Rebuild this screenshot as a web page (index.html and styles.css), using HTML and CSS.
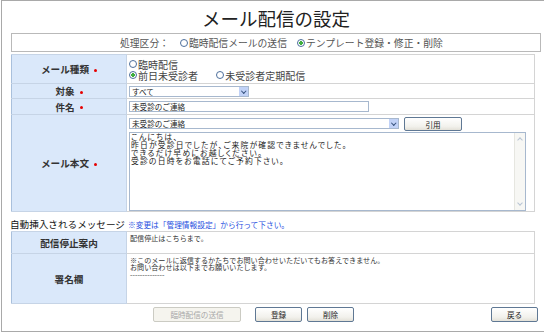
FILE: index.html
```html
<!DOCTYPE html>
<html lang="ja">
<head>
    <meta charset="UTF-8">
    <title>メール配信の設定</title>
    <link rel="stylesheet" href="styles.css">
</head>
<body>

    <div class="page">
        <h1 class="title">メール配信の設定</h1>

        <div class="mode">
            <span class="mode-label">処理区分：</span>
            <span class="opt"><span class="radio"></span>臨時配信メールの送信</span>
            <span class="opt"><span class="radio on"></span>テンプレート登録・修正・削除</span>
        </div>

        <table class="form main">
            <tr class="r-type">
                <th>メール種類<span class="req"></span></th>
                <td>
                    <div class="line"><span class="opt"><span class="radio"></span>臨時配信</span></div>
                    <div class="line">
                        <span class="opt"><span class="radio on"></span>前日未受診者</span>
                        <span class="opt"><span class="radio"></span>未受診者定期配信</span>
                    </div>
                </td>
            </tr>
            <tr class="r-target">
                <th>対象<span class="req"></span></th>
                <td><div class="select w-target">すべて<span class="arrow"></span></div></td>
            </tr>
            <tr class="r-subject">
                <th>件名<span class="req"></span></th>
                <td><div class="input w-subject">未受診のご連絡</div></td>
            </tr>
            <tr class="r-body">
                <th>メール本文<span class="req"></span></th>
                <td>
                    <div class="tpl">
                        <div class="select w-tpl">未受診のご連絡<span class="arrow"></span></div>
                        <button class="btn btn-quote">引用</button>
                    </div>
                    <div class="textarea">
                        <div class="ta-text">
                            <div class="ta-line">こんにちは、</div>
                            <div class="ta-line">昨日が受診日でしたが、ご来院が確認できませんでした。</div>
                            <div class="ta-line">できるだけ早めにお越しください。</div>
                            <div class="ta-line">受診の日時をお電話にてご予約下さい。</div>
                        </div>
                        <div class="scroll"><span class="sb-up"></span><span class="sb-down"></span></div>
                    </div>
                </td>
            </tr>
        </table>

        <div class="auto-head">
            <span class="auto-title">自動挿入されるメッセージ</span>
            <span class="note">※変更は「管理情報設定」から行って下さい。</span>
        </div>

        <table class="form auto">
            <tr class="r-stop">
                <th>配信停止案内</th>
                <td class="plain">配信停止はこちらまで。</td>
            </tr>
            <tr class="r-sign">
                <th>署名欄</th>
                <td class="plain">
                    <div class="sg-line">※このメールに返信するかたちでお問い合わせいただいてもお答えできません。</div>
                    <div class="sg-line">お問い合わせは以下までお願いいたします。</div>
                    <div class="sg-line">--------------</div>
                </td>
            </tr>
        </table>

        <div class="actions">
            <button class="btn btn-send" disabled>臨時配信の送信</button>
            <button class="btn btn-save">登録</button>
            <button class="btn btn-del">削除</button>
            <span class="spacer"></span>
            <button class="btn btn-back">戻る</button>
        </div>
    </div>

</body>
</html>
```

FILE: styles.css
```css
/* Basic styling */
body {
    margin: 0;
    background-color: #ffffff;
    font-family: "Noto Sans CJK JP", "Noto Sans", sans-serif;
    color: #333;
}

.page {
    width: 530px;
    height: 330px;
    margin-left: 1px;
    padding: 0 6px 0 9px;
    border: 1px solid #a9a9a9;
}

.title {
    margin: 0;
    padding-top: 3px;
    height: 29px;
    line-height: 29px;
    font-size: 18.5px;
    font-weight: normal;
    text-align: center;
    color: #222;
}

.mode {
    display: flex;
    align-items: center;
    height: 17px;
    padding-left: 108px;
    border: 1px solid #b9b9b9;
    font-size: 9.8px;
    color: #555;
}

.mode-label {
    margin-right: 11px;
}

.mode .opt {
    margin-right: 10px;
}

.opt {
    display: inline-flex;
    align-items: center;
}

.radio {
    display: inline-block;
    box-sizing: border-box;
    width: 8px;
    height: 8px;
    margin-right: 1px;
    border: 1px solid #4d6f9c;
    border-radius: 50%;
    background-color: #fff;
}

.radio.on {
    background: radial-gradient(circle, #3fae3f 0, #3fae3f 1.6px, #fff 2px);
}

/* form tables */
.form {
    width: 524px;
    border-collapse: collapse;
    border: 1px solid #b4b4b4;
    margin-top: 2px;
}

.form th {
    width: 114px;
    padding: 0;
    background-color: #dae8fa;
    border: 1px solid #c6d4e6;
    border-left-color: #a9c0dc;
    font-size: 9.6px;
    font-weight: bold;
    color: #333;
    text-align: center;
    vertical-align: middle;
}

.form td {
    padding: 0 0 0 2px;
    border: 1px solid #d4d4d4;
    font-size: 10px;
    color: #444;
    vertical-align: middle;
}

.req {
    display: inline-block;
    width: 3px;
    height: 3px;
    margin-left: 5px;
    border-radius: 50%;
    background-color: #e60000;
    vertical-align: middle;
}

.r-type th, .r-type td { height: 28px; }
.r-target th, .r-target td { height: 14px; }
.r-subject th, .r-subject td { height: 15px; }
.r-body th, .r-body td { height: 96px; }

.line {
    height: 11px;
    line-height: 11px;
}

.line .opt {
    margin-right: 16px;
}

.select, .input {
    position: relative;
    box-sizing: border-box;
    height: 11px;
    line-height: 9px;
    padding-left: 2px;
    border: 1px solid #a7b8ce;
    background-color: #fff;
    font-size: 7.6px;
    color: #222;
}

.arrow {
    position: absolute;
    top: 0;
    right: 0;
    width: 9px;
    height: 9px;
    background-color: #c1d2f7;
}

.arrow::after {
    content: "";
    position: absolute;
    left: 2.5px;
    top: 2px;
    width: 2.5px;
    height: 2.5px;
    border-right: 1.2px solid #34507c;
    border-bottom: 1.2px solid #34507c;
    transform: rotate(45deg);
}

.w-target { width: 120px; }
.w-subject { width: 240px; }
.w-tpl { width: 270px; }

.tpl {
    display: flex;
    align-items: center;
    gap: 5px;
    margin-top: 1px;
}

.textarea {
    display: flex;
    box-sizing: border-box;
    width: 397px;
    height: 79px;
    margin-top: 1px;
    border: 1px solid #a7b8ce;
    background-color: #fff;
}

.ta-text {
    flex: 1;
    padding: 0 1px;
    font-size: 7.8px;
    font-feature-settings: "palt";
    letter-spacing: 1.2px;
    color: #222;
}

.ta-line {
    height: 8px;
    line-height: 8px;
    white-space: nowrap;
}

.scroll {
    position: relative;
    width: 10px;
    background-color: #f7f7f4;
    border-left: 1px solid #e6e6e0;
}

.sb-up, .sb-down {
    position: absolute;
    left: 3px;
    width: 3px;
    height: 3px;
    border-left: 1px solid #b8c4d4;
    border-top: 1px solid #b8c4d4;
}

.sb-up { top: 5px; transform: rotate(45deg); }
.sb-down { bottom: 5px; transform: rotate(225deg); }

/* auto-inserted messages */
.auto-head {
    display: flex;
    align-items: flex-end;
    height: 16px;
    margin-top: 2px;
    margin-left: -1px;
}

.auto-title {
    width: 118px;
    font-size: 9.6px;
    line-height: 11px;
    color: #111;
}

.note {
    font-size: 7.7px;
    line-height: 10px;
    color: #1f4fe0;
}

.auto {
    margin-top: 1px;
}

.r-stop th, .r-stop td { height: 18px; }
.r-sign th, .r-sign td { height: 46px; }

.form td.plain {
    padding: 3px 0 0 3px;
    vertical-align: top;
    font-size: 7.1px;
    line-height: 7.2px;
    color: #333;
}

.sg-line {
    height: 7.2px;
    white-space: nowrap;
}

/* buttons */
.actions {
    display: flex;
    align-items: center;
    gap: 5px;
    margin-top: 3px;
    padding-left: 142px;
    padding-right: 3px;
}

.spacer {
    flex: 1;
}

.btn {
    box-sizing: border-box;
    height: 15px;
    padding: 0;
    border: 1px solid #5f7894;
    border-radius: 2px;
    background: linear-gradient(#ffffff, #f2f1ec 70%, #e3e1d8);
    font-family: "Noto Sans CJK JP", sans-serif;
    font-size: 7.6px;
    line-height: 13px;
    color: #222;
    cursor: pointer;
}

.btn-quote { width: 58px; height: 14px; }
.btn-send {
    width: 88px;
    margin-right: 9px;
    border-color: #cbcbc3;
    color: #a8a8a8;
    background: #f5f4ee;
}
.btn-save, .btn-del, .btn-back { width: 47px; }
```
